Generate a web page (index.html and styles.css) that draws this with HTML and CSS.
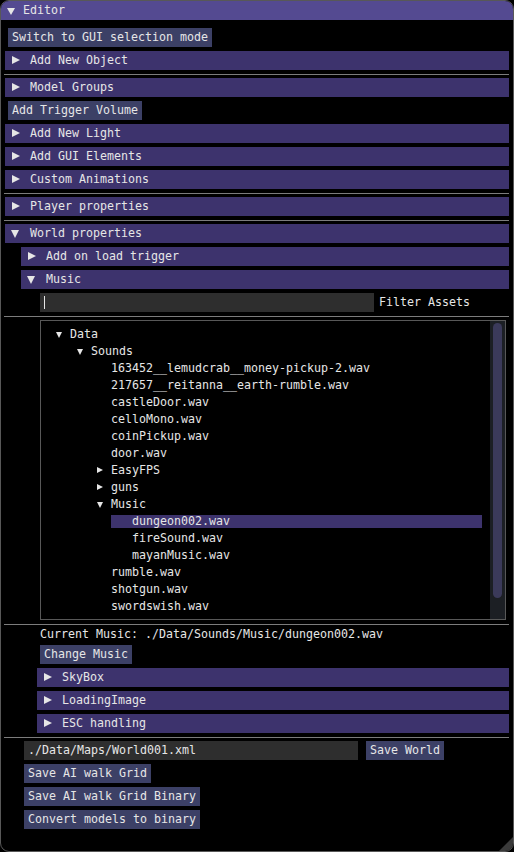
FILE: index.html
```html
<!DOCTYPE html>
<html>
<head>
<meta charset="utf-8">
<link rel="stylesheet" href="styles.css">
</head>
<body>
<div class="window">
  <div class="titlebar"><span class="tarr-title"></span><span class="title">Editor</span></div>
  <div class="content">
    <button class="btn">Switch to GUI selection mode</button>
    <div class="header"><span class="harr right"></span>Add New Object</div>
    <div class="sep"></div>
    <div class="header"><span class="harr right"></span>Model Groups</div>
    <button class="btn">Add Trigger Volume</button>
    <div class="header"><span class="harr right"></span>Add New Light</div>
    <div class="header"><span class="harr right"></span>Add GUI Elements</div>
    <div class="header"><span class="harr right"></span>Custom Animations</div>
    <div class="sep"></div>
    <div class="header"><span class="harr right"></span>Player properties</div>
    <div class="sep"></div>
    <div class="header"><span class="harr down"></span>World properties</div>
    <div class="header l1"><span class="harr right"></span>Add on load trigger</div>
    <div class="header l1"><span class="harr down"></span>Music</div>
    <div class="inrow i2">
      <div class="input filter"><span class="caret"></span></div>
      <span class="label">Filter Assets</span>
    </div>
    <div class="sep"></div>
    <div class="child i2">
      <div class="tree">
        <div class="row d0"><span class="tarr down"></span>Data</div>
        <div class="row d1"><span class="tarr down"></span>Sounds</div>
        <div class="row d2">163452__lemudcrab__money-pickup-2.wav</div>
        <div class="row d2">217657__reitanna__earth-rumble.wav</div>
        <div class="row d2">castleDoor.wav</div>
        <div class="row d2">celloMono.wav</div>
        <div class="row d2">coinPickup.wav</div>
        <div class="row d2">door.wav</div>
        <div class="row d2"><span class="tarr right"></span>EasyFPS</div>
        <div class="row d2"><span class="tarr right"></span>guns</div>
        <div class="row d2"><span class="tarr down"></span>Music</div>
        <div class="row d3 sel">dungeon002.wav</div>
        <div class="row d3">fireSound.wav</div>
        <div class="row d3">mayanMusic.wav</div>
        <div class="row d2">rumble.wav</div>
        <div class="row d2">shotgun.wav</div>
        <div class="row d2">swordswish.wav</div>
      </div>
      <div class="scrollbar"><div class="thumb"></div></div>
    </div>
    <div class="sep"></div>
    <div class="text i2">Current Music: ./Data/Sounds/Music/dungeon002.wav</div>
    <button class="btn i2">Change Music</button>
    <div class="header l2"><span class="harr right"></span>SkyBox</div>
    <div class="header l2"><span class="harr right"></span>LoadingImage</div>
    <div class="header l2"><span class="harr right"></span>ESC handling</div>
    <div class="sep"></div>
    <div class="inrow i1 wide">
      <div class="input path">./Data/Maps/World001.xml</div>
      <button class="btn">Save World</button>
    </div>
    <button class="btn i1">Save AI walk Grid</button>
    <button class="btn i1">Save AI walk Grid Binary</button>
    <button class="btn i1">Convert models to binary</button>
  </div>
  <div class="grip"></div>
</div>
</body>
</html>
```

FILE: styles.css
```css
* { box-sizing: border-box; }
html, body {
  margin: 0;
  padding: 0;
  background: #000;
}
body {
  width: 514px;
  height: 852px;
  overflow: hidden;
  font-family: "DejaVu Sans Mono", "Liberation Mono", monospace;
  font-size: 11.63px;
  color: #e6e6e6;
}
.window {
  position: relative;
  width: 514px;
  height: 852px;
  border: 1px solid #585858;
  border-radius: 9px;
  background: #000;
  overflow: hidden;
}
.titlebar {
  height: 19px;
  background: #544a91;
  display: flex;
  align-items: center;
  padding-left: 6px;
}
.tarr-title {
  width: 0;
  height: 0;
  border-top: 7px solid #e6e6e6;
  border-left: 4px solid transparent;
  border-right: 4px solid transparent;
  margin-right: 8px;
  margin-top: 1px;
}
.title { line-height: 19px; }
.content {
  padding: 8px 4px 0 7px;
  display: flex;
  flex-direction: column;
  align-items: flex-start;
  gap: 4px;
}
.btn {
  font: inherit;
  color: inherit;
  border: none;
  margin: 0;
  height: 19px;
  line-height: 19px;
  padding: 0 4px;
  background: #3c4066;
  white-space: nowrap;
}
.header {
  position: relative;
  align-self: stretch;
  height: 19px;
  line-height: 19px;
  background: #3d336d;
  margin-left: -3px;
  padding-left: 25px;
  white-space: nowrap;
}
.header.l1 { margin-left: 13px; }
.header.l2 { margin-left: 29px; }
.harr {
  position: absolute;
  width: 0;
  height: 0;
}
.harr.right {
  left: 7px;
  top: 5px;
  border-left: 8px solid #e6e6e6;
  border-top: 4.5px solid transparent;
  border-bottom: 4.5px solid transparent;
}
.harr.down {
  left: 6px;
  top: 6px;
  border-top: 8px solid #e6e6e6;
  border-left: 4.5px solid transparent;
  border-right: 4.5px solid transparent;
}
.sep {
  align-self: stretch;
  margin-left: -4px;
  height: 1px;
  margin-bottom: -1px;
  background: #7c7c7c;
}
.i1 { margin-left: 16px; }
.i2 { margin-left: 32px; }
.inrow {
  display: flex;
  align-items: center;
  gap: 5px;
}
.inrow.wide { gap: 8px; }
.input {
  position: relative;
  height: 19px;
  line-height: 19px;
  background: #2e2e2e;
  padding: 0 4px;
  white-space: nowrap;
}
.filter { width: 334px; }
.path { width: 334px; }
.caret {
  position: absolute;
  left: 4px;
  top: 3px;
  width: 1px;
  height: 13px;
  background: #e6e6e6;
}
.label { line-height: 19px; }
.child {
  width: 466px;
  height: 300px;
  border: 1px solid #585858;
  display: flex;
}
.tree {
  flex: 1;
  padding: 7px 8px 0 7px;
  display: flex;
  flex-direction: column;
  gap: 4px;
  overflow: hidden;
}
.row {
  position: relative;
  height: 13px;
  line-height: 13px;
  white-space: nowrap;
}
.d0 { padding-left: 22px; }
.d1 { padding-left: 43px; }
.d2 { padding-left: 63px; }
.d3 { padding-left: 84px; }
.d3.sel {
  margin-left: 63px;
  padding-left: 21px;
  background: #3d336d;
}
.tarr {
  position: absolute;
  width: 0;
  height: 0;
  top: 4px;
}
.tarr.down {
  border-top: 6px solid #e6e6e6;
  border-left: 3px solid transparent;
  border-right: 3px solid transparent;
}
.tarr.right {
  top: 3px;
  border-left: 6px solid #e6e6e6;
  border-top: 3.5px solid transparent;
  border-bottom: 3.5px solid transparent;
}
.d0 > .tarr { left: 8px; }
.d1 > .tarr { left: 29px; }
.d2 > .tarr { left: 49px; }
.scrollbar {
  width: 15px;
  background: #1c1f24;
  padding: 2px 3px 0 3px;
}
.thumb {
  height: 275px;
  border-radius: 5px;
  background: #3b3a5a;
}
.text {
  height: 13px;
  line-height: 13px;
  white-space: nowrap;
}
.grip {
  position: absolute;
  right: 0;
  bottom: 0;
  width: 14px;
  height: 14px;
  background: #3a3a3a;
  clip-path: polygon(100% 0, 100% 100%, 0 100%);
}
```
